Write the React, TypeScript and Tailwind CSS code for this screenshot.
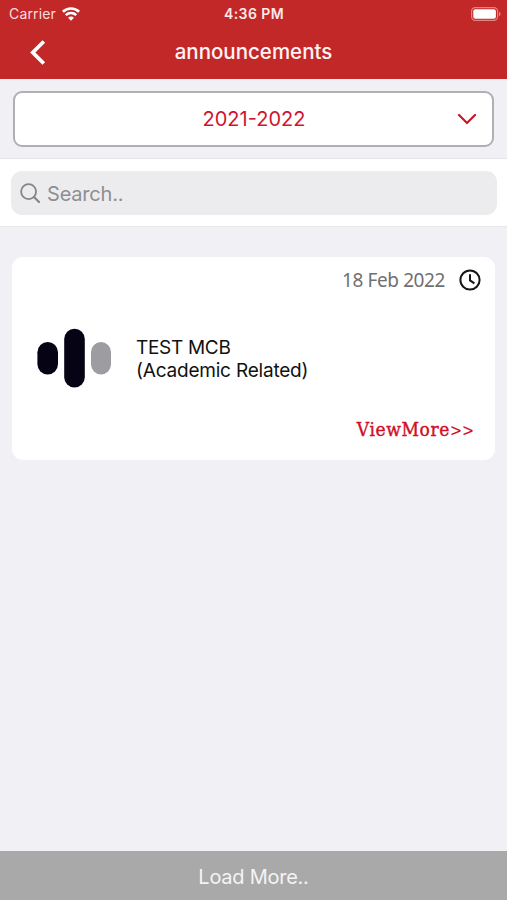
import { useState } from "react";

const WifiIcon = () => (
  <svg width="18" height="14" viewBox="0 0 18 14" fill="none" stroke="white" strokeWidth="2.7">
    <path d="M.9 4.7C5.4.4 12.6.4 17.1 4.7" />
    <path d="M3.8 8.1C6.7 5.3 11.3 5.3 14.2 8.1" />
    <path d="M9 13.7 6.1 10.7C7.7 9.2 10.3 9.2 11.9 10.7Z" fill="white" stroke="none" />
  </svg>
);

const BatteryIcon = () => (
  <svg width="30" height="14" viewBox="0 0 30 14" fill="none">
    <rect x=".6" y=".6" width="26" height="12.8" rx="3.6" stroke="#e08486" strokeWidth="1.2" />
    <rect x="2.3" y="2.3" width="22.6" height="9.4" rx="2" fill="white" />
    <path d="M28 4.8C30 5.5 30 8.5 28 9.2Z" fill="#e08486" />
  </svg>
);

const announcements = [
  { title: "TEST MCB", category: "(Academic Related)", date: "18 Feb 2022" },
];

export default function App() {
  const [query, setQuery] = useState("");

  return (
    <div className="flex h-screen w-full flex-col overflow-hidden bg-[#f0f0f5] font-['Inter',sans-serif]">
      <header className="h-[79px] shrink-0 bg-[#c32829] text-white">
        <div className="grid h-[27px] grid-cols-3 items-center pr-[6px] pl-[9px]">
          <div className="flex items-center gap-[6px]">
            <span className="text-[14px] tracking-[0.15px] text-[#fbdfdf]">Carrier</span>
            <WifiIcon />
          </div>
          <span className="pr-[2px] text-center text-[14px] leading-[20px] font-semibold tracking-[0.4px] text-[#fdeaea]">4:36 PM</span>
          <div className="flex justify-end">
            <BatteryIcon />
          </div>
        </div>
        <div className="grid h-[50px] grid-cols-[76px_1fr_76px] items-center">
          <button aria-label="Back" className="pl-[30px]">
            <svg width="16" height="25" viewBox="0 0 16 25" fill="none" stroke="white" strokeWidth="3.8">
              <path d="M13.8 1.5 2.8 12.5l11 11" />
            </svg>
          </button>
          <h1 className="pt-px text-center text-[20.5px] font-medium text-[#fff3f3]">announcements</h1>
        </div>
      </header>

      <div className="h-[80px] shrink-0 border-b border-[#e5e5e8] px-[13px] pt-[12px]">
        <button className="grid h-[56px] w-full grid-cols-[36px_1fr_36px] items-center rounded-[9px] border-2 border-[#b0b0b2] bg-white">
          <span className="col-start-2 pl-px text-[20px] text-[#d0142c]">2021-2022</span>
          <svg width="20" height="12" viewBox="0 0 20 12" fill="none" stroke="#c4182a" strokeWidth="2.2" strokeLinecap="round">
            <path d="M3 2l8 8 8-8" />
          </svg>
        </button>
      </div>

      <div className="h-[68px] shrink-0 border-b border-[#e8e8eb] bg-white pr-[10px] pl-[11px] pt-[11.5px]">
        <label className="flex h-[44px] items-center gap-[7px] rounded-[11px] bg-[#ececee] pl-[9px]">
          <svg width="20" height="20" viewBox="0 0 20 20" fill="none" stroke="#858589" strokeWidth="1.8" strokeLinecap="round">
            <circle cx="8.6" cy="8.6" r="7.5" />
            <path d="M14 14l5 5" strokeWidth="2.1" />
          </svg>
          <input
            value={query}
            onChange={(e) => setQuery(e.target.value)}
            placeholder="Search.."
            className="flex-1 bg-transparent pt-[2px] text-[20px] tracking-[-0.2px] outline-none placeholder:text-[#8e8e92]"
          />
        </label>
      </div>

      <main className="flex-1 px-[12px] pt-[30px]">
        {announcements.map((item) => (
          <article key={item.title} className="flex h-[203px] flex-col rounded-[11px] bg-white">
            <div className="flex h-[46px] items-center justify-end gap-[14px] pr-[14px]">
              <span className="font-['Noto_Sans',sans-serif] text-[19px] tracking-[-0.4px] text-[#707070]">{item.date}</span>
              <svg width="22" height="22" viewBox="0 0 22 22" fill="none" stroke="#161616" strokeWidth="2">
                <circle cx="11" cy="11" r="9.6" />
                <path d="M11 5.2v6.2l4.4 3" />
              </svg>
            </div>
            <div className="flex h-[110px] items-center pl-[25px]">
              <svg width="75" height="60" viewBox="0 0 75 60">
                <rect x=".4" y="14" width="20.6" height="32.4" rx="10.3" fill="#050314" />
                <rect x="27.2" y=".8" width="20.6" height="58.8" rx="10.3" fill="#050314" />
                <rect x="54" y="14" width="20" height="32.4" rx="10" fill="#9d9ca1" />
              </svg>
              <div className="ml-[24px] pt-[2px] text-[19px] leading-[23px] tracking-[-0.2px] text-[#111]">
                <p className="tracking-[-0.3px]">{item.title}</p>
                <p>{item.category}</p>
              </div>
            </div>
            <button className="mt-[4px] mr-[21px] self-end font-['DejaVu_Serif_Condensed','DejaVu_Serif',serif] text-[19px] leading-[24px] tracking-[0.6px] text-[#cf1026] [-webkit-text-stroke:0.4px_#cf1026]">
              ViewMore<span className="text-[16px] tracking-normal [-webkit-text-stroke:0.1px_#cf1026]">&gt;&gt;</span>
            </button>
          </article>
        ))}
      </main>

      <button className="h-[49px] shrink-0 bg-[#a9a9a9] pt-[2px] text-[20px] tracking-[-0.25px] text-[#f4f4f4]">Load More..</button>
    </div>
  );
}
